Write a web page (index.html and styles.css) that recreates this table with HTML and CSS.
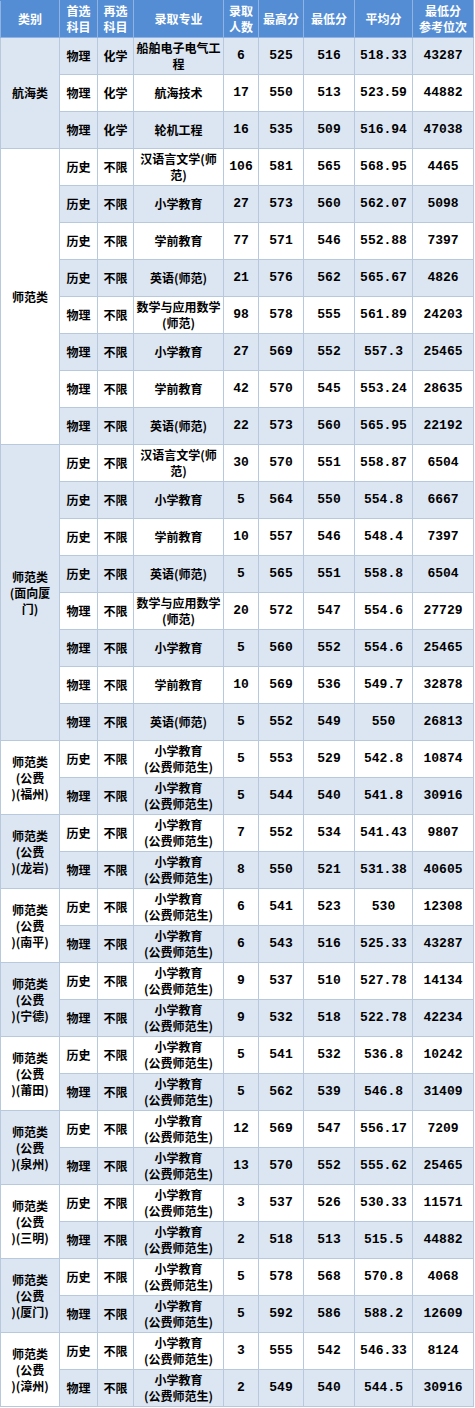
FILE: index.html
```html
<!DOCTYPE html>
<html lang="zh-CN">
<head>
<meta charset="utf-8">
<title>录取分数</title>
<link rel="stylesheet" href="styles.css">
</head>
<body>
<table class="grid">
  <colgroup>
    <col class="c-cat"><col class="c-s1"><col class="c-s2"><col class="c-major"><col class="c-cnt"><col class="c-max"><col class="c-min"><col class="c-avg"><col class="c-rank">
  </colgroup>
  <thead>
    <tr>
      <th>类别</th><th>首选<br>科目</th><th>再选<br>科目</th><th>录取专业</th><th>录取<br>人数</th><th>最高分</th><th>最低分</th><th>平均分</th><th>最低分<br>参考位次</th>
    </tr>
  </thead>
  <tbody>
    <tr class="alt"><td class="cat cat-blue" rowspan="3">航海类</td><td>物理</td><td>化学</td><td>船舶电子电气工<br>程</td><td class="num">6</td><td class="num">525</td><td class="num">516</td><td class="num">518.33</td><td class="num">43287</td></tr>
    <tr><td>物理</td><td>化学</td><td>航海技术</td><td class="num">17</td><td class="num">550</td><td class="num">513</td><td class="num">523.59</td><td class="num">44882</td></tr>
    <tr class="alt"><td>物理</td><td>化学</td><td>轮机工程</td><td class="num">16</td><td class="num">535</td><td class="num">509</td><td class="num">516.94</td><td class="num">47038</td></tr>

    <tr><td class="cat cat-white" rowspan="8">师范类</td><td>历史</td><td>不限</td><td>汉语言文学(师<br>范)</td><td class="num">106</td><td class="num">581</td><td class="num">565</td><td class="num">568.95</td><td class="num">4465</td></tr>
    <tr class="alt"><td>历史</td><td>不限</td><td>小学教育</td><td class="num">27</td><td class="num">573</td><td class="num">560</td><td class="num">562.07</td><td class="num">5098</td></tr>
    <tr><td>历史</td><td>不限</td><td>学前教育</td><td class="num">77</td><td class="num">571</td><td class="num">546</td><td class="num">552.88</td><td class="num">7397</td></tr>
    <tr class="alt"><td>历史</td><td>不限</td><td>英语(师范)</td><td class="num">21</td><td class="num">576</td><td class="num">562</td><td class="num">565.67</td><td class="num">4826</td></tr>
    <tr><td>物理</td><td>不限</td><td>数学与应用数学<br>(师范)</td><td class="num">98</td><td class="num">578</td><td class="num">555</td><td class="num">561.89</td><td class="num">24203</td></tr>
    <tr class="alt"><td>物理</td><td>不限</td><td>小学教育</td><td class="num">27</td><td class="num">569</td><td class="num">552</td><td class="num">557.3</td><td class="num">25465</td></tr>
    <tr><td>物理</td><td>不限</td><td>学前教育</td><td class="num">42</td><td class="num">570</td><td class="num">545</td><td class="num">553.24</td><td class="num">28635</td></tr>
    <tr class="alt"><td>物理</td><td>不限</td><td>英语(师范)</td><td class="num">22</td><td class="num">573</td><td class="num">560</td><td class="num">565.95</td><td class="num">22192</td></tr>

    <tr><td class="cat cat-blue" rowspan="8">师范类<br>(面向厦<br>门)</td><td>历史</td><td>不限</td><td>汉语言文学(师<br>范)</td><td class="num">30</td><td class="num">570</td><td class="num">551</td><td class="num">558.87</td><td class="num">6504</td></tr>
    <tr class="alt"><td>历史</td><td>不限</td><td>小学教育</td><td class="num">5</td><td class="num">564</td><td class="num">550</td><td class="num">554.8</td><td class="num">6667</td></tr>
    <tr><td>历史</td><td>不限</td><td>学前教育</td><td class="num">10</td><td class="num">557</td><td class="num">546</td><td class="num">548.4</td><td class="num">7397</td></tr>
    <tr class="alt"><td>历史</td><td>不限</td><td>英语(师范)</td><td class="num">5</td><td class="num">565</td><td class="num">551</td><td class="num">558.8</td><td class="num">6504</td></tr>
    <tr><td>物理</td><td>不限</td><td>数学与应用数学<br>(师范)</td><td class="num">20</td><td class="num">572</td><td class="num">547</td><td class="num">554.6</td><td class="num">27729</td></tr>
    <tr class="alt"><td>物理</td><td>不限</td><td>小学教育</td><td class="num">5</td><td class="num">560</td><td class="num">552</td><td class="num">554.6</td><td class="num">25465</td></tr>
    <tr><td>物理</td><td>不限</td><td>学前教育</td><td class="num">10</td><td class="num">569</td><td class="num">536</td><td class="num">549.7</td><td class="num">32878</td></tr>
    <tr class="alt"><td>物理</td><td>不限</td><td>英语(师范)</td><td class="num">5</td><td class="num">552</td><td class="num">549</td><td class="num">550</td><td class="num">26813</td></tr>

    <tr><td class="cat cat-white" rowspan="2">师范类<br>(公费<br>)(福州)</td><td>历史</td><td>不限</td><td>小学教育<br>(公费师范生)</td><td class="num">5</td><td class="num">553</td><td class="num">529</td><td class="num">542.8</td><td class="num">10874</td></tr>
    <tr class="alt"><td>物理</td><td>不限</td><td>小学教育<br>(公费师范生)</td><td class="num">5</td><td class="num">544</td><td class="num">540</td><td class="num">541.8</td><td class="num">30916</td></tr>

    <tr><td class="cat cat-blue" rowspan="2">师范类<br>(公费<br>)(龙岩)</td><td>历史</td><td>不限</td><td>小学教育<br>(公费师范生)</td><td class="num">7</td><td class="num">552</td><td class="num">534</td><td class="num">541.43</td><td class="num">9807</td></tr>
    <tr class="alt"><td>物理</td><td>不限</td><td>小学教育<br>(公费师范生)</td><td class="num">8</td><td class="num">550</td><td class="num">521</td><td class="num">531.38</td><td class="num">40605</td></tr>

    <tr><td class="cat cat-white" rowspan="2">师范类<br>(公费<br>)(南平)</td><td>历史</td><td>不限</td><td>小学教育<br>(公费师范生)</td><td class="num">6</td><td class="num">541</td><td class="num">523</td><td class="num">530</td><td class="num">12308</td></tr>
    <tr class="alt"><td>物理</td><td>不限</td><td>小学教育<br>(公费师范生)</td><td class="num">6</td><td class="num">543</td><td class="num">516</td><td class="num">525.33</td><td class="num">43287</td></tr>

    <tr><td class="cat cat-blue" rowspan="2">师范类<br>(公费<br>)(宁德)</td><td>历史</td><td>不限</td><td>小学教育<br>(公费师范生)</td><td class="num">9</td><td class="num">537</td><td class="num">510</td><td class="num">527.78</td><td class="num">14134</td></tr>
    <tr class="alt"><td>物理</td><td>不限</td><td>小学教育<br>(公费师范生)</td><td class="num">9</td><td class="num">532</td><td class="num">518</td><td class="num">522.78</td><td class="num">42234</td></tr>

    <tr><td class="cat cat-white" rowspan="2">师范类<br>(公费<br>)(莆田)</td><td>历史</td><td>不限</td><td>小学教育<br>(公费师范生)</td><td class="num">5</td><td class="num">541</td><td class="num">532</td><td class="num">536.8</td><td class="num">10242</td></tr>
    <tr class="alt"><td>物理</td><td>不限</td><td>小学教育<br>(公费师范生)</td><td class="num">5</td><td class="num">562</td><td class="num">539</td><td class="num">546.8</td><td class="num">31409</td></tr>

    <tr><td class="cat cat-blue" rowspan="2">师范类<br>(公费<br>)(泉州)</td><td>历史</td><td>不限</td><td>小学教育<br>(公费师范生)</td><td class="num">12</td><td class="num">569</td><td class="num">547</td><td class="num">556.17</td><td class="num">7209</td></tr>
    <tr class="alt"><td>物理</td><td>不限</td><td>小学教育<br>(公费师范生)</td><td class="num">13</td><td class="num">570</td><td class="num">552</td><td class="num">555.62</td><td class="num">25465</td></tr>

    <tr><td class="cat cat-white" rowspan="2">师范类<br>(公费<br>)(三明)</td><td>历史</td><td>不限</td><td>小学教育<br>(公费师范生)</td><td class="num">3</td><td class="num">537</td><td class="num">526</td><td class="num">530.33</td><td class="num">11571</td></tr>
    <tr class="alt"><td>物理</td><td>不限</td><td>小学教育<br>(公费师范生)</td><td class="num">2</td><td class="num">518</td><td class="num">513</td><td class="num">515.5</td><td class="num">44882</td></tr>

    <tr><td class="cat cat-blue" rowspan="2">师范类<br>(公费<br>)(厦门)</td><td>历史</td><td>不限</td><td>小学教育<br>(公费师范生)</td><td class="num">5</td><td class="num">578</td><td class="num">568</td><td class="num">570.8</td><td class="num">4068</td></tr>
    <tr class="alt"><td>物理</td><td>不限</td><td>小学教育<br>(公费师范生)</td><td class="num">5</td><td class="num">592</td><td class="num">586</td><td class="num">588.2</td><td class="num">12609</td></tr>

    <tr><td class="cat cat-white" rowspan="2">师范类<br>(公费<br>)(漳州)</td><td>历史</td><td>不限</td><td>小学教育<br>(公费师范生)</td><td class="num">3</td><td class="num">555</td><td class="num">542</td><td class="num">546.33</td><td class="num">8124</td></tr>
    <tr class="alt"><td>物理</td><td>不限</td><td>小学教育<br>(公费师范生)</td><td class="num">2</td><td class="num">549</td><td class="num">540</td><td class="num">544.5</td><td class="num">30916</td></tr>
  </tbody>
</table>
</body>
</html>
```

FILE: styles.css
```css
html, body {
  margin: 0;
  padding: 0;
  background: #ffffff;
}

.grid {
  border-collapse: collapse;
  table-layout: fixed;
  width: 474px;
  font-family: "Noto Sans CJK SC", "Liberation Sans", sans-serif;
  font-size: 12px;
  font-weight: 700;
  color: #000000;
}

.c-cat { width: 59px; }
.c-s1 { width: 38px; }
.c-s2 { width: 36px; }
.c-major { width: 90px; }
.c-cnt { width: 35px; }
.c-max { width: 45px; }
.c-min { width: 51px; }
.c-avg { width: 58px; }
.c-rank { width: 61px; }

.grid tr {
  height: 37px;
}

.grid th,
.grid td {
  padding: 0;
  border: 1px solid #b9c9dd;
  text-align: center;
  vertical-align: middle;
  line-height: 16px;
  white-space: nowrap;
  overflow: visible;
}

.grid th {
  background: #548dd4;
  color: #ffffff;
  font-weight: 700;
  border-color: #8fb4e3;
  border-top-color: #548dd4;
}

.grid tr.alt td {
  background: #dce6f2;
}

.grid td.cat {
  line-height: 16px;
}

.grid tr td.cat-blue {
  background: #dce6f2;
}

.grid tr td.cat-white {
  background: #ffffff;
}

.grid td.num {
  font-family: "Liberation Mono", "DejaVu Sans Mono", monospace;
  font-size: 13px;
  font-weight: 700;
  color: #000000;
}
```
